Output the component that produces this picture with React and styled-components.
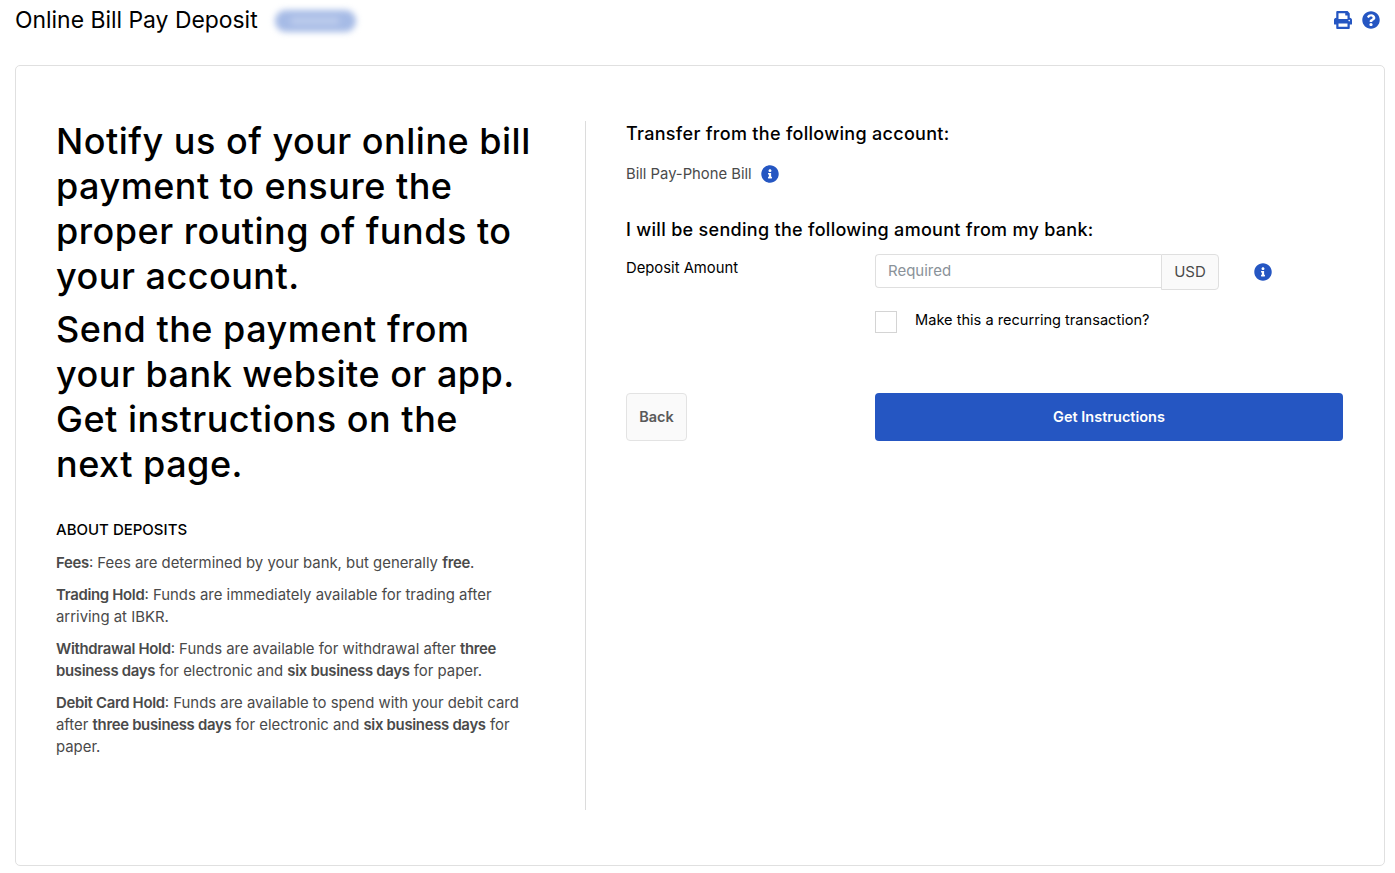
import React from 'react';
import styled, { createGlobalStyle } from 'styled-components';
import { FaPrint, FaQuestionCircle, FaInfoCircle } from 'react-icons/fa';

const GlobalStyle = createGlobalStyle`
  html, body {
    margin: 0;
    padding: 0;
    background: #fff;
    font-family: Inter, "Liberation Sans", sans-serif;
    color: #000;
  }
`;

const Page = styled.div`
  width: 1395px;
  height: 873px;
  padding: 0 10px 7px 15px;
  box-sizing: border-box;
  display: flex;
  flex-direction: column;
  overflow: hidden;
`;

const TopBar = styled.header`
  height: 65px;
  flex: none;
  display: flex;
  align-items: flex-start;
  justify-content: space-between;
`;

const TitleGroup = styled.div`
  display: flex;
  align-items: center;
  height: 40px;
`;

const PageTitle = styled.h1`
  margin: 0;
  font-size: 22.9px;
  line-height: 40px;
  font-weight: 400;
`;

const BlurredBadge = styled.span`
  display: flex;
  align-items: center;
  justify-content: center;
  width: 81px;
  height: 22px;
  margin-left: 17px;
  margin-top: 1px;
  border-radius: 11px;
  background: #a6bbe6;
  filter: blur(3px);
`;

const BadgeText = styled.span`
  display: block;
  width: 48px;
  height: 8px;
  background: #bccbec;
`;

const Tools = styled.div`
  display: flex;
  align-items: center;
  gap: 10px;
  height: 40px;
  padding-right: 5px;
  color: #2556c2;
  font-size: 18px;
  svg { display: block; }
`;

const Card = styled.main`
  flex: 1;
  display: grid;
  grid-template-columns: 530px 1fr;
  padding: 55px 41px 55px 40px;
  border: 1px solid #e0e0e0;
  border-radius: 5px;
  box-sizing: border-box;
`;

const LeftColumn = styled.section`
  padding-right: 50px;
  border-right: 1px solid #dcdcdc;
`;

const RightColumn = styled.section`
  padding-left: 40px;
`;

const Headline = styled.p`
  margin: 0 0 8px;
  font-size: 36px;
  line-height: 45px;
  font-weight: 500;
  letter-spacing: 0.5px;
  &:first-child { margin-top: -2px; }
`;

const AboutTitle = styled.h4`
  margin: 32px 0 11px;
  font-size: 15px;
  line-height: 22px;
  font-weight: 500;
`;

const AboutText = styled.p`
  margin: 0 0 10px;
  font-size: 14.9px;
  line-height: 22px;
  color: #4a4a4a;
  b { font-weight: 600; letter-spacing: -0.3px; }
`;

const SectionTitle = styled.h3`
  margin: 0;
  font-size: 18px;
  line-height: 26px;
  font-weight: 500;
  letter-spacing: 0.3px;
`;

const AccountRow = styled.div`
  display: flex;
  align-items: center;
  gap: 9px;
  margin-top: 15px;
  margin-bottom: 31px;
  height: 24px;
  font-size: 14.8px;
  color: #4a4a4a;
`;

const InfoIcon = styled(FaInfoCircle)`
  display: block;
  flex: none;
  color: #2556c2;
  font-size: 18px;
`;

const FormRow = styled.div`
  display: grid;
  grid-template-columns: 249px 1fr;
  margin-top: 11px;
`;

const FieldLabel = styled.label`
  font-size: 14.8px;
  line-height: 22px;
  padding-top: 3px;
`;

const AmountGroup = styled.div`
  display: flex;
  align-items: flex-start;
`;

const AmountInput = styled.input`
  width: 286px;
  height: 34px;
  padding: 0 12px 2px;
  box-sizing: border-box;
  border: 1px solid #dfdfdf;
  border-right: 0;
  border-radius: 4px 0 0 4px;
  font: inherit;
  font-size: 15px;
  outline: none;
  &::placeholder { color: #8a9299; opacity: 1; }
`;

const Currency = styled.span`
  width: 58px;
  height: 36px;
  box-sizing: border-box;
  border: 1px solid #dfdfdf;
  border-radius: 0 4px 4px 0;
  background: #fafafa;
  color: #4a4a4a;
  font-size: 15px;
  line-height: 34px;
  text-align: center;
`;

const AmountInfo = styled.span`
  margin-left: 35px;
  margin-top: 9px;
`;

const CheckRow = styled.div`
  display: flex;
  align-items: flex-start;
  gap: 18px;
  margin-top: 21px;
  margin-left: 249px;
  font-size: 14.6px;
  line-height: 18px;
`;

const CheckBox = styled.span`
  width: 22px;
  height: 22px;
  box-sizing: border-box;
  border: 1px solid #d4d4d4;
  background: #fff;
`;

const Actions = styled.div`
  display: grid;
  grid-template-columns: 249px 468px;
  margin-top: 60px;
`;

const BackButton = styled.button`
  width: 61px;
  height: 48px;
  padding: 0 0 2px;
  border: 1px solid #e3e3e3;
  border-radius: 4px;
  background: #fafafa;
  color: #595959;
  font: inherit;
  font-size: 14.5px;
  font-weight: 600;
`;

const PrimaryButton = styled.button`
  height: 48px;
  padding: 0 0 2px;
  border: 0;
  border-radius: 4px;
  background: #2556c2;
  color: #fff;
  font: inherit;
  font-size: 14.5px;
  font-weight: 600;
`;

export default function App() {
  return (
    <>
      <GlobalStyle />
      <Page>
        <TopBar>
          <TitleGroup>
            <PageTitle>Online Bill Pay Deposit</PageTitle>
            <BlurredBadge><BadgeText /></BlurredBadge>
          </TitleGroup>
          <Tools>
            <FaPrint />
            <FaQuestionCircle />
          </Tools>
        </TopBar>
        <Card>
          <LeftColumn>
            <Headline>Notify us of your online bill payment to ensure the proper routing of funds to your account.</Headline>
            <Headline>Send the payment from your bank website or app. Get instructions on the next page.</Headline>
            <AboutTitle>ABOUT DEPOSITS</AboutTitle>
            <AboutText><b>Fees</b>: Fees are determined by your bank, but generally <b>free</b>.</AboutText>
            <AboutText><b>Trading Hold</b>: Funds are immediately available for trading after arriving at IBKR.</AboutText>
            <AboutText><b>Withdrawal Hold</b>: Funds are available for withdrawal after <b>three business days</b> for electronic and <b>six business days</b> for paper.</AboutText>
            <AboutText><b>Debit Card Hold</b>: Funds are available to spend with your debit card after <b>three business days</b> for electronic and <b>six business days</b> for paper.</AboutText>
          </LeftColumn>
          <RightColumn>
            <SectionTitle>Transfer from the following account:</SectionTitle>
            <AccountRow>
              Bill Pay-Phone Bill
              <InfoIcon />
            </AccountRow>
            <SectionTitle>I will be sending the following amount from my bank:</SectionTitle>
            <FormRow>
              <FieldLabel>Deposit Amount</FieldLabel>
              <AmountGroup>
                <AmountInput placeholder="Required" />
                <Currency>USD</Currency>
                <AmountInfo><InfoIcon /></AmountInfo>
              </AmountGroup>
            </FormRow>
            <CheckRow>
              <CheckBox />
              Make this a recurring transaction?
            </CheckRow>
            <Actions>
              <div><BackButton>Back</BackButton></div>
              <PrimaryButton>Get Instructions</PrimaryButton>
            </Actions>
          </RightColumn>
        </Card>
      </Page>
    </>
  );
}
